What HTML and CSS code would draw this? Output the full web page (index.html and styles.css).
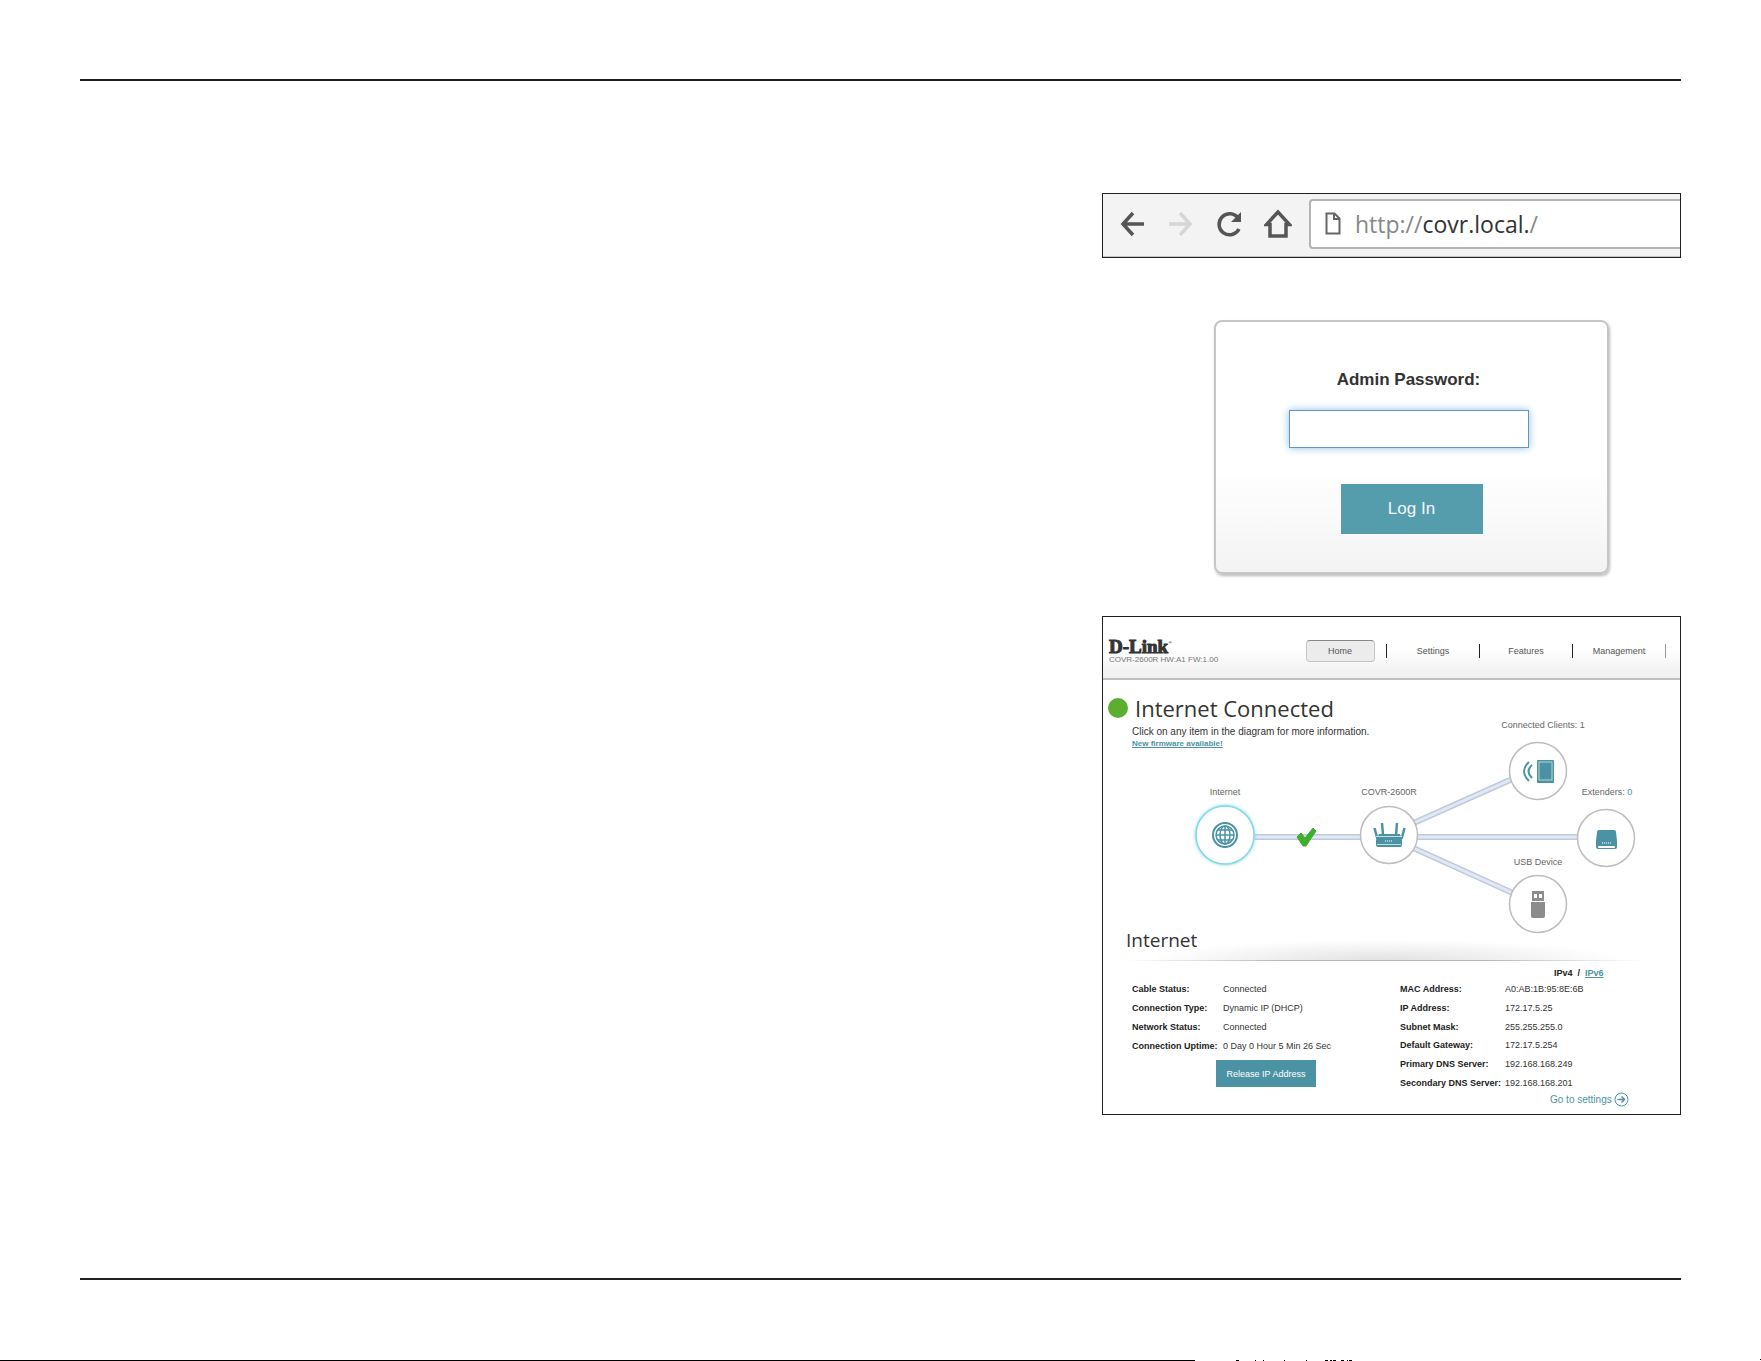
FILE: index.html
```html
<!DOCTYPE html>
<html lang="en">
<head>
<meta charset="utf-8">
<meta name="viewport" content="width=device-width, initial-scale=1">
<title>COVR-2600R</title>
<link rel="stylesheet" href="styles.css">
</head>
<body>
<main class="sheet">
  <div class="figures">

    <div class="browser">
      <button class="tool" type="button" aria-label="Back"><svg width="26" height="30" viewBox="0 0 26 30"><path d="M13 4 3 15l10 11M3 15h21" fill="none" stroke="#555" stroke-width="3.500"/></svg></button>
      <button class="tool" type="button" aria-label="Forward"><svg width="26" height="30" viewBox="0 0 26 30"><path d="M12 4l10 11-10 11M22 15H1" fill="none" stroke="#d6d6d3" stroke-width="3.500"/></svg></button>
      <button class="tool" type="button" aria-label="Reload"><svg width="26" height="30" viewBox="0 0 26 30"><path d="M22 9A10.500 10.500 0 1 0 23 20" fill="none" stroke="#555" stroke-width="3.500"/><path d="M25 3v10H15z" fill="#555"/></svg></button>
      <button class="tool" type="button" aria-label="Home"><svg width="28" height="30" viewBox="0 0 28 30"><path d="M14 3 2.500 15.500H6V27h16V15.500h3.500z" fill="none" stroke="#555" stroke-width="3.500"/></svg></button>
      <div class="address">
        <svg width="16" height="24" viewBox="0 0 16 24"><path d="M1.500 1.500h8l5 5v15h-13zM9 2v5h5" fill="none" stroke="#666" stroke-width="2"/></svg>
        <span class="url"><span class="scheme">http://</span>covr.local.<span class="scheme">/</span></span>
      </div>
    </div>

    <form class="login">
      <div class="field">
        <label class="login-label" for="password">Admin Password:</label>
        <input class="login-input" id="password" type="password">
      </div>
      <button class="login-button" type="button">Log In</button>
    </form>

    <section class="router">
      <header class="top">
        <div class="brand">
          <div class="logo">D-Link<sup class="mark">®</sup></div>
          <div class="model">COVR-2600R HW:A1 FW:1.00</div>
        </div>
        <nav class="menu">
          <a class="item" href="#home"><span class="tab">Home</span></a>
          <a class="item" href="#settings">Settings</a>
          <a class="item" href="#features">Features</a>
          <a class="item" href="#management">Management</a>
        </nav>
      </header>

      <div class="status">
        <svg class="diagram" viewBox="0 0 577 258" role="group" aria-label="Network diagram">
          <defs>
            <filter id="glow" x="-20%" y="-20%" width="140%" height="140%"><feGaussianBlur stdDeviation="1.5"/></filter>
          </defs>
          <g class="link-edge">
            <path d="M152 157H508M286 154 434 88M286 157 434 224"/>
          </g>
          <g class="link-core">
            <path d="M152 157H508M286 154 434 88M286 157 434 224"/>
          </g>
          <path d="M194 157l4-4 4 5 8-10 3 3-10 15h-3z" fill="#3fae2e" stroke="#3fae2e" stroke-width="1"/>

          <circle cx="122" cy="155" r="30" fill="#7fdcec" filter="url(#glow)"/>
          <circle cx="122" cy="155" r="29" fill="#fff" stroke="#86d8e6" stroke-width="1.500"/>
          <g fill="none" stroke="#4b93a4" stroke-width="1.500">
            <circle cx="122" cy="155" r="12" stroke-width="2"/>
            <circle cx="122" cy="155" r="9" />
            <ellipse cx="122" cy="155" rx="5" ry="9"/>
            <path d="M122 146v18M113 155h18M115 150h14M115 160h14"/>
          </g>

          <g class="ring">
            <circle cx="286" cy="155" r="28.500"/>
            <circle cx="435" cy="91" r="28.500"/>
            <circle cx="503" cy="158" r="28.500"/>
            <circle cx="435" cy="224" r="28.500"/>
          </g>

          <g fill="#4b93a4">
            <path d="M276 154h21l2 6v5q0 2-2 2h-22q-2 0-2-2v-5z"/>
            <path d="M271.500 148l3 11M279 143l1 12M294 143l-1 12M301.500 148l-3 11" stroke="#4b93a4" stroke-width="2.500" fill="none"/>
            <path d="M273 156.500h26" stroke="#fff" stroke-width=".7"/>
            <path d="M274 164.500h24" stroke="#fff" stroke-width=".7"/>
            <path d="M282 161h8" stroke="#cde3e8" stroke-width="1.500" stroke-dasharray="1 1"/>
          </g>
          <g fill="#4b93a4">
            <rect x="434" y="80" width="17" height="23" rx="1"/>
            <rect x="436" y="82" width="13" height="18" fill="none" stroke="#b7d6dd" stroke-width="1"/>
            <path d="M429 85q-7 6 0 13M426 82q-10 9 0 19" fill="none" stroke="#4b93a4" stroke-width="2"/>
          </g>
          <g>
            <path d="M496 150h15q2 0 2 2l1 9v6q0 2-2 2h-17q-2 0-2-2v-6l1-9q0-2 2-2z" fill="#4b93a4"/>
            <rect x="495" y="166" width="17" height="2" rx="1" fill="#fff"/>
            <path d="M499 163h9" stroke="#cde3e8" stroke-width="1.500" stroke-dasharray="1 1"/>
          </g>
          <g fill="#8c8c8c">
            <path d="M429 211h12v10h-12z"/>
            <path d="M428 222h14v14q0 2-2 2h-10q-2 0-2-2z"/>
            <path d="M431 214h3v4h-3zM436 214h3v4h-3z" fill="#fff"/>
          </g>

          <g class="caption">
            <text x="122" y="115">Internet</text>
            <text x="286" y="115">COVR-2600R</text>
            <text x="440" y="48">Connected Clients: 1</text>
            <text x="504" y="115">Extenders: <tspan class="count">0</tspan></text>
            <text x="435" y="185">USB Device</text>
          </g>
        </svg>
        <div class="intro">
          <h1 class="headline"><span class="dot"></span>Internet Connected</h1>
          <p class="hint">Click on any item in the diagram for more information.</p>
          <a class="firmware" href="#firmware">New firmware available!</a>
        </div>
      </div>

      <h2 class="subhead">Internet</h2>
      <div class="divider"></div>

      <div class="details">
        <div class="left">
          <table class="facts short">
            <tr><th scope="row">Cable Status:</th><td>Connected</td></tr>
            <tr><th scope="row">Connection Type:</th><td>Dynamic IP (DHCP)</td></tr>
            <tr><th scope="row">Network Status:</th><td>Connected</td></tr>
            <tr><th scope="row">Connection Uptime:</th><td>0 Day 0 Hour 5 Min 26 Sec</td></tr>
          </table>
          <button class="release" type="button">Release IP Address</button>
        </div>
        <div class="right">
          <div class="versions">IPv4 &nbsp;/ &nbsp;<a class="version-link" href="#ipv6">IPv6</a></div>
          <table class="facts tall">
            <tr><th scope="row">MAC Address:</th><td>A0:AB:1B:95:8E:6B</td></tr>
            <tr><th scope="row">IP Address:</th><td>172.17.5.25</td></tr>
            <tr><th scope="row">Subnet Mask:</th><td>255.255.255.0</td></tr>
            <tr><th scope="row">Default Gateway:</th><td>172.17.5.254</td></tr>
            <tr><th scope="row">Primary DNS Server:</th><td>192.168.168.249</td></tr>
            <tr><th scope="row">Secondary DNS Server:</th><td>192.168.168.201</td></tr>
          </table>
          <a class="goto" href="#settings">Go to settings
            <svg width="15" height="15" viewBox="0 0 15 15"><circle cx="7.500" cy="7.500" r="6.500" fill="none" stroke="#4b93a4"/><path d="M3.500 7.500h7M7.500 4.500l3 3-3 3" fill="none" stroke="#4b93a4" stroke-width="1.500"/></svg>
          </a>
        </div>
      </div>
    </section>

  </div>
</main>
<svg class="edge" viewBox="0 0 1761 2" preserveAspectRatio="none" aria-hidden="true">
  <path d="M0 1h1195v1H0zM1236 1h3v1h-3zM1255 1h1v1h-1zM1263 1h1v1h-1zM1284 1h1v1h-1zM1306 1h1v1h-1zM1325 1h3v1h-3zM1330 1h2v1h-2zM1333 1h3v1h-3zM1341 1h3v1h-3zM1347 1h1v1h-1zM1349 1h3v1h-3zM1760 0h1v1h-1z"/>
</svg>
</body>
</html>
```
FILE: styles.css
```css
* { box-sizing: border-box; }

body {
  margin: 0;
  min-height: 100vh;
  display: flex;
  flex-direction: column;
  background: #fff;
  color: #333;
  font-family: "Liberation Sans", Arial, sans-serif;
}

button { font-family: inherit; border: 0; padding: 0; }

.sheet {
  flex: 1;
  margin: 79px 80px;
  padding: 112px 0 0;
  border-top: 2px solid #231f20;
  border-bottom: 2px solid #231f20;
  display: grid;
  grid-template-columns: 1022fr 579fr;
  align-items: start;
}

.figures {
  grid-column: 2;
  display: flex;
  flex-direction: column;
}

/* Browser bar */
.browser {
  display: flex;
  align-items: center;
  height: 65px;
  padding: 0 0 3px 17px;
  gap: 22px;
  background: #f3f3f3;
  border: 1px solid #231f20;
  box-shadow: inset 0 -1px #c4c4c4;
  overflow: hidden;
}
.tool { display: flex; background: none; }
.address {
  flex: 1;
  height: 50px;
  margin-left: -5px;
  padding-left: 14px;
  display: flex;
  align-items: center;
  gap: 14px;
  background: #fff;
  border: 2px solid #b4b4b4;
  border-right: 0;
  border-radius: 4px 0 0 4px;
}
.url {
  font-family: "Open Sans", "Noto Sans", sans-serif;
  font-size: 23px;
  line-height: 30px;
  color: #333;
}
.scheme { color: #888; }

/* Login card */
.login {
  align-self: center;
  width: 395px;
  height: 254px;
  margin: 62px 0 42px 40px;
  padding-top: 48px;
  display: flex;
  flex-direction: column;
  align-items: center;
  border: 2px solid #c6c6c6;
  border-radius: 8px;
  background: linear-gradient(#fff 60%, #f3f3f3);
  box-shadow: 1px 2px 3px #bbb;
}
.field {
  display: flex;
  flex-direction: column;
  align-items: center;
  padding-right: 6px;
}
.login-label {
  font-size: 17px;
  font-weight: bold;
  line-height: 20px;
}
.login-input {
  width: 240px;
  height: 38px;
  margin: 20px 0 36px;
  border: 1px solid #5f97cd;
  background: #fff;
  box-shadow: 0 0 8px #8fc0e4;
}
.login-button {
  width: 142px;
  height: 50px;
  background: #559dad;
  color: #f2f6f7;
  font-size: 17px;
}

/* Router page */
.router {
  border: 1px solid #231f20;
  background: #fff;
}
.top {
  display: flex;
  justify-content: space-between;
  height: 63px;
  padding: 22px 14px 0 6px;
  border-bottom: 2px solid #c0c0c0;
  background: linear-gradient(#fff 50%, #f0f0f0);
}
.logo {
  font-family: "Liberation Serif", serif;
  font-size: 19px;
  font-weight: bold;
  line-height: 16px;
  -webkit-text-stroke: 1px #333;
}
.mark {
  font-size: 5px;
  line-height: 0;
  vertical-align: 9px;
  -webkit-text-stroke: 0;
}
.model { font-size: 8px; line-height: 10px; color: #777; }
.menu { display: flex; }
.item {
  width: 93px;
  height: 14px;
  margin-top: 5px;
  display: flex;
  align-items: center;
  justify-content: center;
  border-right: 1px solid #222;
  font-size: 9px;
  color: #555;
  text-decoration: none;
}
.item:last-child { border-color: #999; }
.tab {
  flex: none;
  width: 69px;
  height: 22px;
  line-height: 20px;
  text-align: center;
  border: 1px solid #c4c4c4;
  border-top-color: #888;
  border-radius: 4px;
  background: #ececec;
}

.status { display: grid; }
.status > * { grid-area: 1 / 1; }
.diagram { width: 100%; display: block; }
.link-edge { fill: none; stroke: #c0cadf; stroke-width: 6; }
.link-core { fill: none; stroke: #e2e7f2; stroke-width: 3; }
.ring { fill: #fff; stroke: #bdbdbd; stroke-width: 1.5; }
.caption { font-size: 9px; fill: #666; text-anchor: middle; }
.count { fill: #4b93a4; }

.intro {
  justify-self: start;
  align-self: start;
  padding: 14px 0 0 5px;
}
.headline {
  display: flex;
  align-items: center;
  gap: 7px;
  margin: 0;
  font-family: "Open Sans", "Noto Sans", sans-serif;
  font-size: 22px;
  font-weight: normal;
  line-height: 28px;
}
.dot { width: 20px; height: 20px; border-radius: 50%; background: #5dae30; }
.hint { margin: 4px 0 0 24px; font-size: 10px; line-height: 12px; }
.firmware {
  display: block;
  margin-left: 24px;
  font-size: 8px;
  font-weight: bold;
  line-height: 12px;
  color: #4b93a4;
}

.subhead {
  margin: -11px 0 0;
  padding-left: 23px;
  font-family: "Open Sans", "Noto Sans", sans-serif;
  font-size: 19px;
  font-weight: normal;
  line-height: 26px;
}
.divider {
  height: 21px;
  margin: -13px 36px 0 24px;
  border-bottom: 1px solid;
  border-image: linear-gradient(90deg, transparent, #b8b8b8 30%, #b8b8b8 70%, transparent) 1;
  background: radial-gradient(ellipse 46% 100% at 50% 100%, #e2e2e2, transparent);
}

.details {
  display: grid;
  grid-template-columns: 268fr 309fr;
  height: 153px;
  font-size: 9px;
}
.left { padding: 19px 0 0 29px; }
.right { padding: 6px 0 0 29px; }
.facts { border-collapse: collapse; line-height: 10px; white-space: nowrap; }
.facts th, .facts td { padding: 0; text-align: left; }
.facts th { color: #222; }
.short { height: 75px; }
.short th { width: 91px; }
.tall { height: 112px; }
.tall th { width: 105px; }
.release {
  display: block;
  width: 100px;
  height: 27px;
  margin: 5px 0 0 84px;
  background: #4b93a4;
  color: #fff;
  font-size: 9px;
}
.versions {
  padding-left: 154px;
  font-weight: bold;
  line-height: 13px;
  color: #222;
}
.version-link { color: #4b93a4; }
.goto {
  display: flex;
  align-items: center;
  gap: 2px;
  padding-left: 150px;
  font-size: 10px;
  line-height: 14px;
  color: #4b93a4;
  text-decoration: none;
}

.edge { display: block; width: 100%; height: 2px; }
```
